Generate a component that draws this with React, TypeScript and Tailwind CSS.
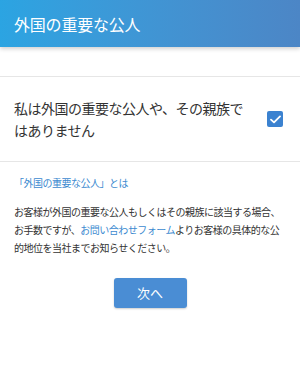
import React, { useState } from "react";

const font = { fontFamily: '"Noto Sans CJK JP", "Noto Sans", sans-serif' };

const App: React.FC = () => {
  const [checked, setChecked] = useState(true);

  return (
    <div className="w-[300px] h-[389px] bg-white overflow-hidden" style={font}>
      {/* header */}
      <div className="h-[47px] flex items-center px-[14px] bg-gradient-to-r from-[#2ba4e2] to-[#4c86c6] shadow-[0_2px_4px_rgba(0,0,0,0.18)]">
        <h1 className="text-white text-[16px] leading-none tracking-[-0.2px]">外国の重要な公人</h1>
      </div>

      <div className="mt-[29px] border-t border-[#e6e6e6]" />

      {/* checkbox row */}
      <label className="flex items-center justify-between pl-[14px] pr-[17px] h-[84px] cursor-pointer">
        <span className="text-[14px] leading-[22px] tracking-[-0.5px] text-[#333] w-[236px]">
          私は外国の重要な公人や、その親族ではありません
        </span>
        <span
          onClick={() => setChecked(c => !c)}
          className={`w-[16px] h-[16px] rounded-[2px] flex items-center justify-center ${checked ? "bg-[#3b82d0]" : "border border-gray-400"}`}
        >
          {checked && (
            <svg width="11" height="9" viewBox="0 0 11 9" fill="none">
              <path d="M1 4.6L4 7.4L10 1.4" stroke="white" strokeWidth="1.8" strokeLinecap="round" strokeLinejoin="round" />
            </svg>
          )}
        </span>
      </label>

      <div className="border-t border-[#e6e6e6]" />

      <div className="px-[14px]">
        <a className="block mt-[14px] text-[10px] leading-[14px] tracking-[-0.5px] text-[#3c8ad0]">「外国の重要な公人」とは</a>

        <p className="mt-[13px] text-[10px] leading-[18px] tracking-[-0.5px] text-[#333]">
          お客様が外国の重要な公人もしくはその親族に該当する場合、お手数ですが、<span className="text-[#3c8ad0]">お問い合わせフォーム</span>よりお客様の具体的な公的地位を当社までお知らせください。
        </p>
      </div>

      <div className="flex justify-center mt-[21px]">
        <button className="w-[73px] h-[30px] rounded-[3px] bg-[#4a8dd4] text-white text-[13px] shadow-[0_1px_2px_rgba(0,0,0,0.2)]">
          次へ
        </button>
      </div>
    </div>
  );
};

export default App;
